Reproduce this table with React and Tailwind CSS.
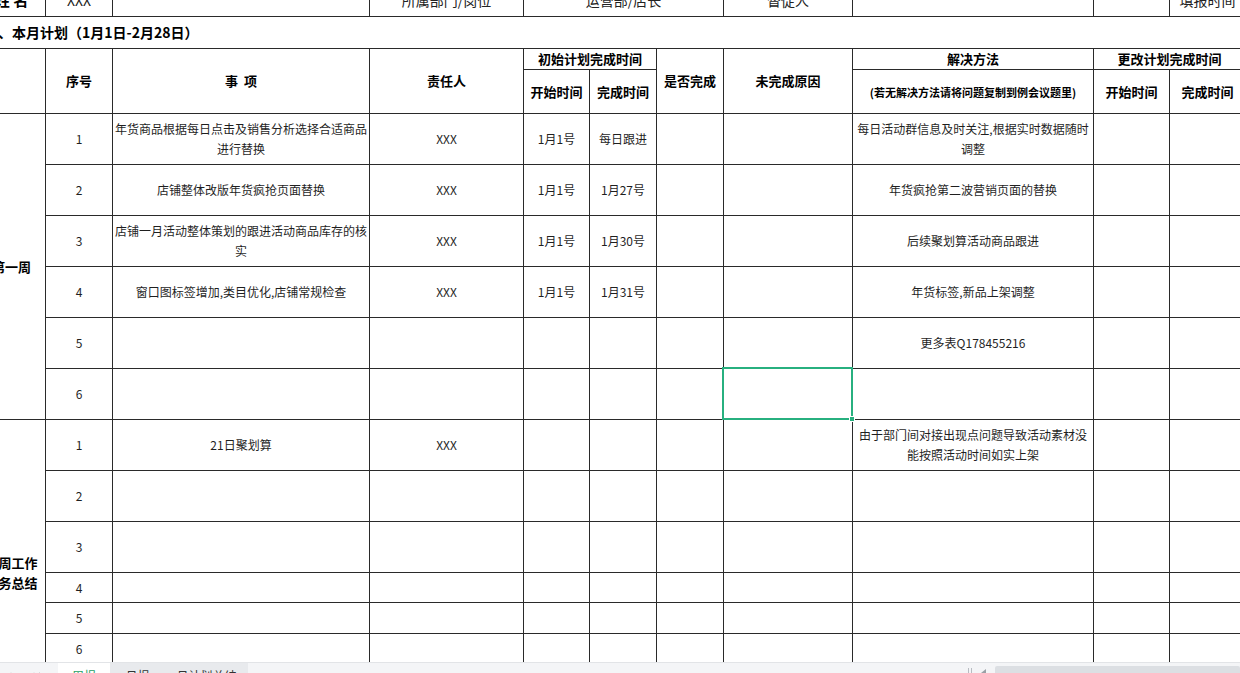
import React from "react";
import { ChevronRight, ChevronLast } from "lucide-react";

const cell =
  "flex items-center justify-center text-center whitespace-nowrap border-r border-b border-[#2a2a2a]";
const hd = `${cell} font-bold text-[13px] text-black leading-[18px]`;
const hdSmall = `${cell} font-bold text-[11px] text-black leading-[14px]`;
const td = `${cell} text-[12px] text-[#1f1f1f] leading-[20px]`;
const top = `${cell} text-[14px] text-[#222]`;

const week1 = [
  {
    n: 1,
    item: ["年货商品根据每日点击及销售分析选择合适商品", "进行替换"],
    who: "XXX",
    s: "1月1号",
    e: "每日跟进",
    sol: ["每日活动群信息及时关注,根据实时数据随时", "调整"],
  },
  {
    n: 2,
    item: ["店铺整体改版年货疯抢页面替换"],
    who: "XXX",
    s: "1月1号",
    e: "1月27号",
    sol: ["年货疯抢第二波营销页面的替换"],
  },
  {
    n: 3,
    item: ["店铺一月活动整体策划的跟进活动商品库存的核", "实"],
    who: "XXX",
    s: "1月1号",
    e: "1月30号",
    sol: ["后续聚划算活动商品跟进"],
  },
  {
    n: 4,
    item: ["窗口图标签增加,类目优化,店铺常规检查"],
    who: "XXX",
    s: "1月1号",
    e: "1月31号",
    sol: ["年货标签,新品上架调整"],
  },
  { n: 5, sol: ["更多表Q178455216"] },
  { n: 6, selected: true },
];

const week2 = [
  {
    n: 1,
    item: ["21日聚划算"],
    who: "XXX",
    sol: ["由于部门间对接出现点问题导致活动素材没", "能按照活动时间如实上架"],
  },
  { n: 2 },
  { n: 3 },
  { n: 4 },
  { n: 5 },
  { n: 6 },
  { n: 7, hidden: true },
  { n: 8, hidden: true },
];

function Lines({ lines }) {
  if (!lines) return null;
  return (
    <span>
      {lines.map((l, i) => (
        <React.Fragment key={i}>
          {i > 0 && <br />}
          {l}
        </React.Fragment>
      ))}
    </span>
  );
}

function Row({ r }) {
  return (
    <>
      <div className={td}>{r.hidden ? "" : r.n}</div>
      <div className={td}>
        <Lines lines={r.item} />
      </div>
      <div className={td}>{r.who}</div>
      <div className={td}>{r.s}</div>
      <div className={td}>{r.e}</div>
      <div className={td}></div>
      <div className={`${td} relative`}>
        {r.selected && (
          <div className="absolute -left-[2px] -top-[2px] -right-[1px] -bottom-[1px] border-2 border-[#27b07f] z-10">
            <div className="absolute -right-[4px] -bottom-[4px] w-[6px] h-[6px] bg-[#27b07f] border border-white"></div>
          </div>
        )}
      </div>
      <div className={td}>
        <Lines lines={r.sol} />
      </div>
      <div className={td}></div>
      <div className={td}></div>
    </>
  );
}

export default function App() {
  return (
    <div className="w-[1240px] h-[673px] overflow-hidden bg-white flex flex-col [font-family:'Noto_Sans_CJK_SC','Noto_Sans',sans-serif]">
      <div className="h-[662px] shrink-0 overflow-hidden">
        <div className="-ml-[22px] -mt-[15px] w-max grid grid-cols-[68px_67px_257px_154px_66px_67px_67px_129px_241px_76px_76px] grid-rows-[32px_32px_21px_44px_repeat(9,51px)_30px_31px_30px_31px_31px]">
          {/* top row */}
          <div className={`${cell} font-bold text-[15px] text-black`}>姓 名</div>
          <div className={top}>XXX</div>
          <div className={top}></div>
          <div className={top}>所属部门/岗位</div>
          <div className={`${top} col-span-3`}>运营部/店长</div>
          <div className={top}>督促人</div>
          <div className={top}></div>
          <div className={top}></div>
          <div className={top}>填报时间</div>

          {/* title row */}
          <div className="col-span-11 border-b border-[#2a2a2a] flex items-center pl-[6px] text-[14px] font-bold text-black whitespace-nowrap">
            二、本月计划（1月1日-2月28日）
          </div>

          {/* header */}
          <div className={`${hd} row-span-2`}></div>
          <div className={`${hd} row-span-2`}>序号</div>
          <div className={`${hd} row-span-2`}>事&nbsp;&nbsp;项</div>
          <div className={`${hd} row-span-2`}>责任人</div>
          <div className={`${hd} col-span-2`}>初始计划完成时间</div>
          <div className={`${hd} row-span-2`}>是否完成</div>
          <div className={`${hd} row-span-2`}>未完成原因</div>
          <div className={hd}>解决方法</div>
          <div className={`${hd} col-span-2`}>更改计划完成时间</div>
          <div className={hd}>开始时间</div>
          <div className={hd}>完成时间</div>
          <div className={hdSmall}>(若无解决方法请将问题复制到例会议题里)</div>
          <div className={hd}>开始时间</div>
          <div className={hd}>完成时间</div>

          {/* week 1 */}
          <div className={`${hd} row-span-6`}>第一周</div>
          {week1.map((r) => (
            <Row key={"a" + r.n} r={r} />
          ))}

          {/* week 2 */}
          <div className={`${cell} font-bold text-[13px] text-black leading-[20px] row-span-8`}>
            <span>
              本周工作
              <br />
              任务总结
            </span>
          </div>
          {week2.map((r) => (
            <Row key={"b" + r.n} r={r} />
          ))}
        </div>
      </div>

      {/* sheet tab bar */}
      <div className="h-[26px] shrink-0 flex items-stretch bg-[#f4f5f7] border-t border-[#e2e4e7] text-[12px] text-[#333]">
        <div className="w-[58px] flex items-center pl-[7px] gap-[12px] text-[#9aa0a6]">
          <ChevronRight size={12} strokeWidth={1.5} />
          <ChevronLast size={12} strokeWidth={1.5} />
        </div>
        <div className="w-[52px] bg-white text-[#1e9e63] flex items-center justify-center">
          周报
        </div>
        <div className="flex bg-[#e8eaed]">
          <div className="w-[55px] flex items-center justify-center">月报</div>
          <div className="w-[83px] flex items-center justify-center">月计划总结</div>
        </div>
        <div className="w-[20px] flex items-center justify-center text-[16px] text-[#555]">+</div>
        <div className="flex-1"></div>
        <div className="w-[272px] flex items-start pt-[3px]">
          <div className="w-[4px] h-[10px] mt-[2px] border-l border-r border-[#b8bcc2]"></div>
          <div className="w-[23px] flex justify-center mt-[3px]">
            <div className="w-0 h-0 border-y-[4px] border-y-transparent border-r-[5px] border-r-[#9aa0a6]"></div>
          </div>
          <div className="flex-1 h-[16px] bg-[#dcdfe3] rounded-[2px]"></div>
        </div>
      </div>
    </div>
  );
}
